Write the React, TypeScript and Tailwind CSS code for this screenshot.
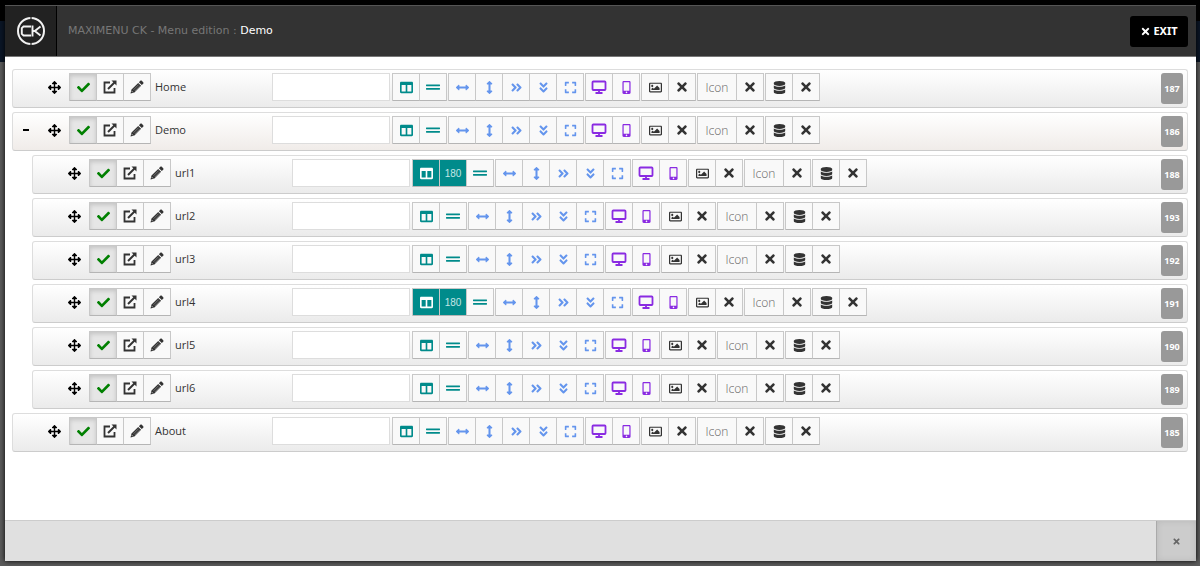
import { useState } from "react";
import type { ReactNode } from "react";
import {
  FaAngleDoubleDown,
  FaAngleDoubleRight,
  FaArrowsAlt,
  FaArrowsAltH,
  FaArrowsAltV,
  FaCheck,
  FaColumns,
  FaDatabase,
  FaExpand,
  FaGripLines,
  FaMobileAlt,
  FaRegImage,
  FaTimes,
} from "react-icons/fa";

type MenuItem = {
  id: number;
  title: string;
  child?: boolean;
  parent?: boolean;
  width?: number;
};

const items: MenuItem[] = [
  { id: 187, title: "Home" },
  { id: 186, title: "Demo", parent: true },
  { id: 188, title: "url1", child: true, width: 180 },
  { id: 193, title: "url2", child: true },
  { id: 192, title: "url3", child: true },
  { id: 191, title: "url4", child: true, width: 180 },
  { id: 190, title: "url5", child: true },
  { id: 189, title: "url6", child: true },
  { id: 185, title: "About" },
];

function Group({ children }: { children: ReactNode }) {
  return (
    <div className="flex h-7 shrink-0 border-l border-[#c8c8c8]">{children}</div>
  );
}

function Tool({
  label,
  className = "w-[27px] bg-[#f9f9f9] text-[#333]",
  children,
}: {
  label: string;
  className?: string;
  children: ReactNode;
}) {
  return (
    <button
      type="button"
      aria-label={label}
      className={`flex h-7 items-center justify-center border-y border-r border-[#c8c8c8] border-b-[#b5b5b5] ${className}`}
    >
      {children}
    </button>
  );
}

const teal = "w-[27px] bg-[#f9f9f9] text-[#008b8b]";
const tealOn = "w-[27px] bg-[#008b8b] text-white";
const blue = "w-[27px] bg-[#f9f9f9] text-[#6495ed]";
const purple = "w-[27px] bg-[#f9f9f9] text-[#8a2be2]";

function OpenIcon() {
  return (
    <svg viewBox="0 0 14 14" className="size-[14px]" fill="none" stroke="currentColor">
      <path d="M7 2.500H1.500v10h10V8" strokeWidth="1.800" />
      <path d="M5 9l6.500-6.500" strokeWidth="2" />
      <path d="M8.500 0.500h5v5z" fill="currentColor" stroke="none" />
    </svg>
  );
}

function PencilIcon() {
  return (
    <svg viewBox="0 0 14 14" className="size-[14px]" fill="currentColor">
      <path d="M10.300 0.800c.5-.5 1-.5 1.500 0l1.400 1.400c.5.500.5 1 0 1.500l-1.400 1.400-2.900-2.900zM8.200 2.900l2.900 2.900-6.700 6.700L.5 13.500l1-3.900z" />
      <path d="M3.500 9.800l5.200-5.200M4.800 11l5.200-5.200" stroke="#b5b5b5" strokeWidth="0.500" />
      <path d="M1.800 11.200l1.100 1.100" stroke="#f9f9f9" strokeWidth="0.800" />
    </svg>
  );
}

function ScreenIcon() {
  return (
    <svg viewBox="0 0 16 14" className="h-[14px] w-4" fill="none" stroke="currentColor">
      <rect x="1.500" y="1.500" width="13" height="8.500" rx="0.800" strokeWidth="1.800" />
      <path d="M8 10v3M4.500 13h7" strokeWidth="1.800" />
    </svg>
  );
}

function Logo() {
  return (
    <svg viewBox="0 0 30 30" className="size-[30px]" fill="none" stroke="#f2f2f2">
      <circle cx="15" cy="15" r="13" strokeWidth="2" />
      <path d="M15 0v4M15 26v4" stroke="#222" strokeWidth="1.200" />
      <path d="M15 10.500H7.500L5.800 12.200v5.600l1.700 1.700H15" strokeWidth="1.900" />
      <path d="M16.500 9.500v11M24.500 10.500L18.800 15H16.500M18.800 15l5.700 4.500" strokeWidth="1.900" />
    </svg>
  );
}

function Row({ item }: { item: MenuItem }) {
  const indent = item.child ? "ml-5" : "";
  const shade = item.parent ? "to-[#f0ece9]" : "to-[#ebebeb]";

  return (
    <li
      className={`flex h-[39px] items-start rounded-[3px] border border-[#ddd] border-b-[#ccc] bg-linear-to-b from-white pt-[3px] pr-1 ${shade} ${indent}`}
    >
      <div className="flex h-7 w-14 shrink-0 items-center justify-between pr-2 pl-2.5 text-black">
        {item.parent ? (
          <button type="button" aria-label="Collapse" className="h-0.5 w-1.5 bg-black" />
        ) : (
          <span />
        )}
        <FaArrowsAlt className="size-[13px]" />
      </div>

      <Group>
        <Tool label="Published" className="w-[27px] bg-[#e6e6e6] text-[#008000] shadow-[inset_0_2px_4px_rgba(0,0,0,0.15)]">
          <FaCheck className="size-[13px]" />
        </Tool>
        <Tool label="Open">
          <OpenIcon />
        </Tool>
        <Tool label="Edit">
          <PencilIcon />
        </Tool>
      </Group>
      <span className="w-[121px] shrink-0 pl-1 text-[11px] leading-7 text-[#333]">{item.title}</span>

      <div className="flex shrink-0 gap-px">
        <input
          type="text"
          aria-label={`Description of ${item.title}`}
          className="mr-px h-7 w-[118px] border border-[#ddd] bg-white px-1 text-xs outline-none"
        />
        <Group>
          <Tool label="Columns" className={item.width ? tealOn : teal}>
            <FaColumns className="size-[13px]" />
          </Tool>
          {item.width && (
            <Tool label="Column width" className={tealOn}>
              <span className="font-['Liberation_Sans'] text-[10px] text-[#c5e6e6]">{item.width}</span>
            </Tool>
          )}
          <Tool label="New row" className={teal}>
            <FaGripLines className="size-[14px]" />
          </Tool>
        </Group>
        <Group>
          <Tool label="Width" className={blue}>
            <FaArrowsAltH className="size-[13px]" />
          </Tool>
          <Tool label="Height" className={blue}>
            <FaArrowsAltV className="size-[13px]" />
          </Tool>
          <Tool label="Left margin" className={blue}>
            <FaAngleDoubleRight className="size-[13px]" />
          </Tool>
          <Tool label="Top margin" className={blue}>
            <FaAngleDoubleDown className="size-[13px]" />
          </Tool>
          <Tool label="Full width" className={blue}>
            <FaExpand className="size-[13px]" />
          </Tool>
        </Group>
        <Group>
          <Tool label="Desktop" className={purple}>
            <ScreenIcon />
          </Tool>
          <Tool label="Mobile" className={purple}>
            <FaMobileAlt className="size-[13px]" />
          </Tool>
        </Group>
        <Group>
          <Tool label="Image">
            <FaRegImage className="size-[13px]" />
          </Tool>
          <Tool label="Remove image">
            <FaTimes className="size-[14px]" />
          </Tool>
        </Group>
        <Group>
          <Tool label="Icon" className="w-[39px] bg-[#f9f9f9] text-[#666]">
            <span className="pt-0.5 text-xs font-light">Icon</span>
          </Tool>
          <Tool label="Remove icon">
            <FaTimes className="size-[14px]" />
          </Tool>
        </Group>
        <Group>
          <Tool label="Module">
            <FaDatabase className="size-[13px]" />
          </Tool>
          <Tool label="Remove module">
            <FaTimes className="size-[14px]" />
          </Tool>
        </Group>
      </div>

      <span className="ml-auto flex h-[31px] w-[22px] items-center justify-center rounded-[3px] bg-[#999] text-[9px] font-bold text-white">
        {item.id}
      </span>
    </li>
  );
}

export default function App() {
  const [open, setOpen] = useState(true);

  return (
    <div className="relative flex h-screen flex-col overflow-hidden bg-[#5b5b5b] font-['Open_Sans',sans-serif]">
      {/* Dimmed page behind the dialog */}
      <div className="absolute inset-x-0 top-0 h-[21px] bg-black" />
      <div className="absolute inset-x-0 top-[21px] h-[41px] bg-[#0a1526]" />
      <div className="absolute bottom-0 left-[63px] flex h-5 items-center gap-[49px] pb-1">
        <span className="ml-[9px] h-3.5 w-[19px] rounded-full bg-[#333]" />
        <span className="h-3.5 w-[19px] rounded-full bg-[#333]" />
        <span className="ml-6 h-3.5 w-[19px] rounded-full bg-[#333]" />
      </div>

      <main className="relative mt-[5px] mr-1 mb-[5px] ml-[5px] flex min-h-0 flex-1 flex-col bg-white shadow-[0_0_5px_#000]">
        <header className="flex h-[52px] shrink-0 items-center border-t border-b border-t-[#555] border-b-[#777] bg-[#333]">
          <div className="flex h-full w-[52px] items-center justify-center border-r border-black bg-[#222]">
            <Logo />
          </div>
          <h1 className="pl-[11px] font-['DejaVu_Sans',sans-serif] text-[11px] text-[#777]">
            MAXIMENU CK - Menu edition : <span className="text-white">Demo</span>
          </h1>
          <button
            type="button"
            onClick={() => setOpen(false)}
            className="mr-2 ml-auto flex h-[31px] w-[58px] items-center justify-center gap-0.5 rounded-[3px] bg-black font-['Noto_Sans',sans-serif] text-[11px] font-bold text-white"
          >
            <FaTimes className="size-[11px]" />
            EXIT
          </button>
        </header>

        <ul className="flex min-h-0 flex-1 flex-col gap-1 overflow-hidden pt-3 pr-2 pl-[7px]">
          {open && items.map((item) => <Row key={item.id} item={item} />)}
        </ul>

        <footer className="flex h-[41px] shrink-0 justify-end border-t border-[#ccc] bg-[#e0e0e0]">
          <button
            type="button"
            aria-label="Close"
            className="flex w-10 items-center justify-center border-l border-[#aaa] bg-[#ccc] text-[#666] shadow-[inset_0_0_6px_rgba(0,0,0,0.1)]"
          >
            <FaTimes className="size-[9px]" />
          </button>
        </footer>
      </main>
    </div>
  );
}
